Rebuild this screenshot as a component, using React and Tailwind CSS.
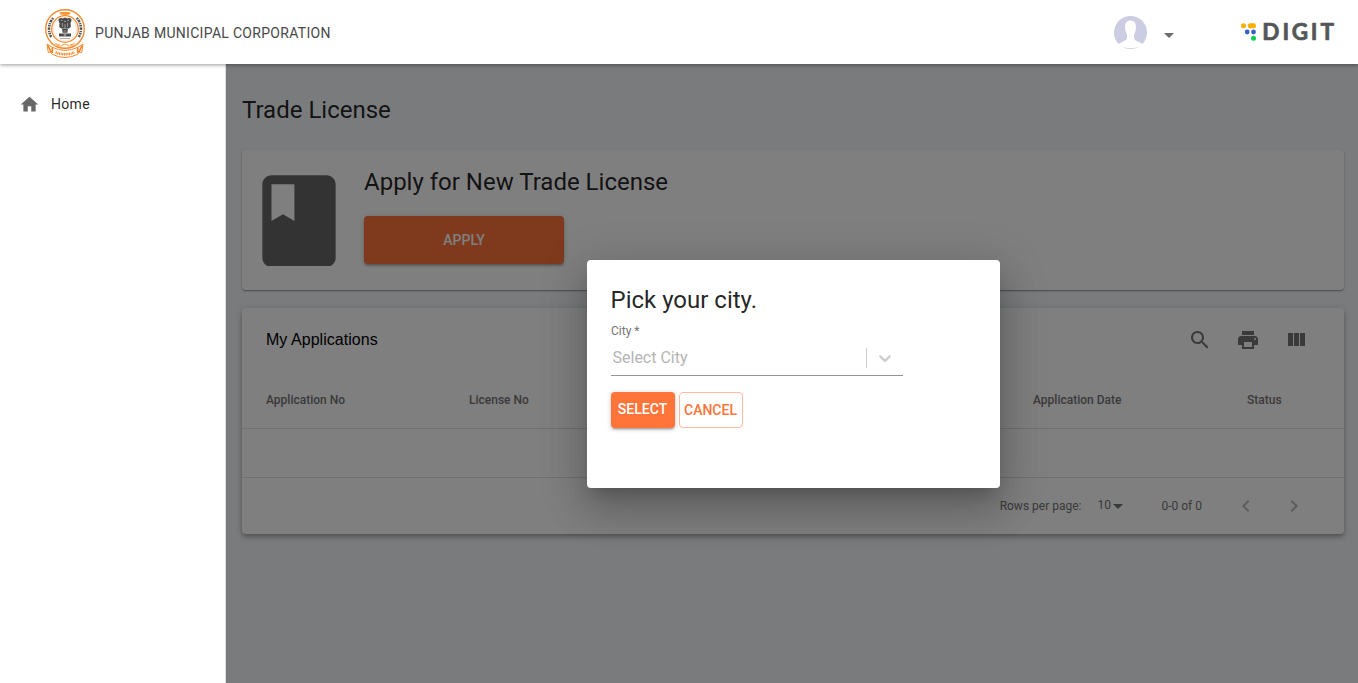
import React from "react";

const Icon = ({ d, className }) => (
  <svg viewBox="0 0 24 24" className={className} fill="currentColor">
    <path d={d} />
  </svg>
);

const paths = {
  home: "M10 20v-6h4v6h5v-8h3L12 3 2 12h3v8z",
  book: "M18 2H6c-1.1 0-2 .9-2 2v16c0 1.1.9 2 2 2h12c1.1 0 2-.9 2-2V4c0-1.1-.9-2-2-2zM6 4h5v8l-2.5-1.5L6 12V4z",
  search:
    "M15.5 14h-.79l-.28-.27C15.41 12.59 16 11.11 16 9.5 16 5.91 13.09 3 9.5 3S3 5.91 3 9.5 5.91 16 9.5 16c1.61 0 3.09-.59 4.23-1.57l.27.28v.79l5 4.99L20.49 19l-4.99-5zm-6 0C7.01 14 5 11.99 5 9.5S7.01 5 9.5 5 14 7.01 14 9.5 11.99 14 9.5 14z",
  print:
    "M19 8H5c-1.66 0-3 1.34-3 3v6h4v4h12v-4h4v-6c0-1.66-1.34-3-3-3zm-3 11H8v-5h8v5zm3-7c-.55 0-1-.45-1-1s.45-1 1-1 1 .45 1 1-.45 1-1 1zm-1-9H6v4h12V3z",
  columns: "M10 18h5V5h-5v13zm-6 0h5V5H4v13zM16 5v13h5V5h-5z",
  left: "M15.41 7.41L14 6l-6 6 6 6 1.41-1.41L10.83 12z",
  right: "M10 6L8.59 7.41 13.17 12l-4.58 4.59L10 18l6-6z",
  drop: "M7 10l5 5 5-5z",
};

const Emblem = () => (
  <svg viewBox="0 0 42 50" className="h-[50px] w-[42px] shrink-0">
    <g fill="none" stroke="#f78a2e">
      <circle cx="21" cy="21" r="19.3" strokeWidth="1.4" />
      <circle cx="21" cy="21" r="13.3" strokeWidth="1.3" />
      <circle cx="21" cy="21" r="11.600" strokeWidth=".4" strokeOpacity=".6" />
    </g>
    <g fill="none" stroke="#555" strokeWidth="2.6">
      <path d="M9.200 10 A16.3 16.3 0 0 0 7.200 29" strokeDasharray="1.6 .8 2.6 1 1.2 .7" />
      <path d="M32.800 10 A16.3 16.3 0 0 1 34.800 29" strokeDasharray="1.6 .8 2.6 1 1.2 .7" />
    </g>
    <ellipse cx="21" cy="5.3" rx="5.6" ry="1.600" fill="#fbaa4c" />
    <path d="M16 4.8h10M17 6h8" stroke="#f58220" strokeWidth=".6" />
    <path
      d="M7 35.500q6 3 9 2.500M35 35.500q-6 3-9 2.500M16.500 38.500q4.500-4.500 9 0M11 35.500l5 1.500M31 35.500l-5 1.500"
      fill="none"
      stroke="#f9a55c"
      strokeWidth="1.1"
    />
    <g fill="#4a4a4a">
      <path d="M14.500 12.500q-.2-2.400 2.600-2.500l1.500.6q2.400-1.900 4.800 0l1.500-.6q2.800.1 2.600 2.500l-1 2.800.3 3.700-2 1.500h-7.600l-2-1.500.3-3.700z" />
      <path d="M18 20.800h6l-.6 4h-4.800zM15 25.500h12v2.900H15z" />
      <path d="M16 30h10v1H16z" opacity=".45" />
    </g>
    <g stroke="#ccc" strokeWidth=".6" fill="none">
      <path d="M17 12.500h1.600M23.400 12.500h1.600M20 13.500h2M18.400 15v4M23.600 15v4M21 16v4M19.500 23h3" />
      <circle cx="21" cy="27" r=".9" />
    </g>
    <path
      d="M3 36l5 3.200q13 6.300 26 0L39 36l-1.300 8.500-2.200-.4-1.800 2.200q-12.700 6.400-25.400 0l-1.800-2.200-2.200.4z"
      fill="#fff"
      stroke="#f78a2e"
      strokeWidth="1"
      strokeLinejoin="round"
    />
    <path
      d="M4 37.500l3 6.500M8.300 39.500v5.500M38 37.500l-3 6.500M33.700 39.500v5.500"
      stroke="#f58220"
      strokeWidth="1.6"
    />
    <path
      d="M11.500 44.300q9.500 4 19 0"
      fill="none"
      stroke="#f78a2e"
      strokeWidth="2.4"
      strokeDasharray="1.3 .6 1 .5"
    />
  </svg>
);

const Avatar = () => (
  <svg viewBox="0 0 33 33" className="h-[33px] w-[33px]">
    <circle cx="16.500" cy="16.500" r="16.500" fill="#cccce2" />
    <path
      d="M16.500 4.500c3.700 0 5.400 2.600 5.400 6.200 0 1.600-.1 3.200-.5 4.600-.4 1.600-1.400 2.700-1.400 4.200v2.300c0 2.300 2.500 3 4.800 4.200 1.700.9 3.700 1.600 4.400 2.600-3.500 2.700-8 3.600-12.700 3.600s-9.200-.9-12.700-3.600c.7-1 2.700-1.700 4.400-2.600 2.300-1.200 4.800-1.900 4.800-4.200v-2.300c0-1.500-1-2.600-1.400-4.200-.4-1.400-.5-3-.5-4.600 0-3.600 1.700-6.200 5.400-6.200z"
      fill="#fff"
    />
  </svg>
);

const DigitLogo = () => (
  <svg viewBox="0 0 96 32" className="h-8 w-24">
    <circle cx="3.500" cy="9.700" r="2.500" fill="#f9ae08" />
    <rect x="7.700" y="7.200" width="8.300" height="5" rx="2.500" fill="#f9ae08" />
    <circle cx="7.200" cy="16" r="2.400" fill="#3c5fc4" />
    <circle cx="13.500" cy="16" r="2.400" fill="#3c5fc4" />
    <circle cx="13.500" cy="22.200" r="2.500" fill="#0ccf58" />
    <text
      x="22.300 42.500 51.800 70.800 80.400"
      y="24.400"
      fill="#555658"
      stroke="#555658"
      strokeWidth=".7"
      strokeLinejoin="round"
      className="font-['Lato',sans-serif] text-[22.500px] leading-none font-bold"
    >
      DIGIT
    </text>
  </svg>
);

const Header = () => (
  <header className="relative z-20 flex h-16 shrink-0 items-center bg-white pr-[22px] pl-11 shadow-[0_1px_4px_rgba(0,0,0,0.4)]">
    <div className="pt-0.5">
      <Emblem />
    </div>
    <span className="ml-[9px] pt-0.5 text-sm tracking-[0.3px] text-[#484848]">PUNJAB MUNICIPAL CORPORATION</span>
    <div className="ml-auto flex items-center">
      <Avatar />
      <Icon d={paths.drop} className="mt-1.5 ml-2.5 h-6 w-6 text-[#6b6b6b]" />
      <div className="ml-[59px]">
        <DigitLogo />
      </div>
    </div>
  </header>
);

const Sidebar = () => (
  <aside className="w-[226px] shrink-0 border-r border-[#e0e0e0] bg-white pt-[30px]">
    <a className="flex h-5 items-center pl-[19px] text-sm text-black/87">
      <Icon d={paths.home} className="h-[21px] w-[21px] text-[#676767]" />
      <span className="ml-[11px] tracking-[0.3px]">Home</span>
    </a>
  </aside>
);

const buttonShadow =
  "shadow-[0_1px_5px_rgba(0,0,0,0.2),0_2px_2px_rgba(0,0,0,0.14),0_3px_1px_-2px_rgba(0,0,0,0.12)]";

const ApplyCard = () => (
  <section className="mt-6 flex h-[140px] rounded bg-white pl-[2px] shadow-[0_1px_3px_rgba(0,0,0,0.2),0_1px_1px_rgba(0,0,0,0.14),0_2px_1px_-1px_rgba(0,0,0,0.12)]">
    <div className="mt-4 h-[100px] overflow-hidden">
      <Icon d={paths.book} className="h-[110px] w-[110px] text-[#676767]" />
    </div>
    <div className="ml-[10px] pt-4">
      <h2 className="text-2xl leading-8 text-black/87">Apply for New Trade License</h2>
      <button className={`mt-[18px] flex h-12 w-[200px] items-center justify-center rounded-sm bg-[#fe743a] text-sm font-medium text-white ${buttonShadow}`}>
        APPLY
      </button>
    </div>
  </section>
);

const columns = [
  ["Application No", "w-[203px]"],
  ["License No", "w-[564px]"],
  ["Application Date", "w-[214px]"],
  ["Status", "flex-1"],
];

const Applications = () => (
  <section className="mt-[18px] h-[226px] rounded bg-white shadow-[0_2px_4px_-1px_rgba(0,0,0,0.2),0_4px_5px_rgba(0,0,0,0.14),0_1px_10px_rgba(0,0,0,0.12)]">
    <div className="flex h-16 items-center justify-between pr-9 pl-6">
      <h3 className="font-['Liberation_Sans',sans-serif] text-base tracking-[0.04px] text-black">My Applications</h3>
      <div className="flex gap-6 text-[#747474]">
        <Icon d={paths.search} className="h-6 w-6" />
        <Icon d={paths.print} className="h-6 w-6" />
        <Icon d={paths.columns} className="h-6 w-6" />
      </div>
    </div>
    <div className="flex h-[57px] items-center border-b border-[#e0e0e0] pl-6 text-xs font-medium text-[#757575]">
      {columns.map(([label, width]) => (
        <div key={label} className={width}>
          {label}
        </div>
      ))}
    </div>
    <div className="h-[49px] border-b border-[#e0e0e0]" />
    <div className="flex h-14 items-center justify-end pr-[38px] text-xs text-[#757575]">
      <span>Rows per page:</span>
      <span className="ml-4 pb-0.5">10</span>
      <Icon d={paths.drop} className="-ml-[5px] h-6 w-6" />
      <span className="ml-[31.500px]">0-0 of 0</span>
      <Icon d={paths.left} className="ml-8 h-6 w-6 text-[#b8b8b8]" />
      <Icon d={paths.right} className="ml-6 h-6 w-6 text-[#b8b8b8]" />
    </div>
  </section>
);

const CityDialog = () => (
  <div className="h-[228px] w-[413px] rounded bg-white px-6 pt-6 shadow-[0_11px_15px_-7px_rgba(0,0,0,0.2),0_24px_38px_3px_rgba(0,0,0,0.14),0_9px_46px_8px_rgba(0,0,0,0.12)]">
    <h2 className="-ml-[0.5px] text-2xl leading-8 text-black/87">Pick your city.</h2>
    <label className="mt-[7px] block text-xs leading-4 text-[#757575]">City *</label>
    <div className="flex h-[37px] w-[292px] items-center border-b border-[#949494] pt-0.5 pl-[1.5px]">
      <span className="text-base text-[#b5b5b5]">Select City</span>
      <span className="ml-auto h-5 w-px bg-[#ccc]" />
      <svg viewBox="0 0 20 20" className="mr-2 ml-2 h-5 w-5 text-[#ccc]" fill="currentColor">
        <path d="M4.516 7.548c0.436-0.446 1.043-0.481 1.576 0l3.908 3.747 3.908-3.747c0.533-0.481 1.141-0.446 1.574 0 0.436 0.445 0.408 1.197 0 1.615-0.406 0.418-4.695 4.502-4.695 4.502-0.217 0.223-0.502 0.335-0.787 0.335s-0.570-0.112-0.789-0.335c0 0-4.287-4.084-4.695-4.502s-0.436-1.170 0-1.615z" />
      </svg>
    </div>
    <div className="mt-4 flex gap-1 text-sm font-medium">
      <button className={`flex h-9 w-16 items-center justify-center rounded-sm bg-[#fe7439] pr-px pb-0.5 text-white ${buttonShadow}`}>
        SELECT
      </button>
      <button className="flex h-9 w-16 items-center justify-center rounded border border-[#feba9e] pr-px text-[#fe7439]">
        CANCEL
      </button>
    </div>
  </div>
);

export default function App() {
  return (
    <div className="flex h-screen flex-col overflow-hidden bg-white font-['Roboto',sans-serif]">
      <Header />
      <div className="flex min-h-0 flex-1">
        <Sidebar />
        <main className="relative flex-1 bg-[#f4f7fb] pt-[30px] pr-[14px] pl-4">
          <h1 className="text-2xl leading-8 text-black/87">Trade License</h1>
          <ApplyCard />
          <Applications />
          <div className="absolute inset-0 flex items-start justify-center bg-black/50 pt-[196px] pl-[3px]">
            <CityDialog />
          </div>
        </main>
      </div>
    </div>
  );
}
